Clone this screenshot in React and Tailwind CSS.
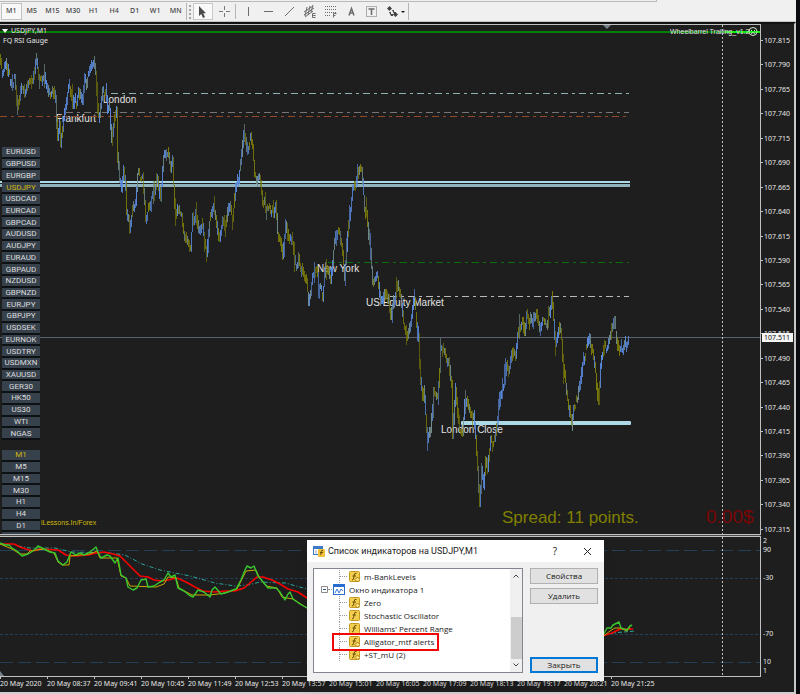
import { useMemo } from 'react';

const TIMEFRAMES = ['M1', 'M5', 'M15', 'M30', 'H1', 'H4', 'D1', 'W1', 'MN'];

const SYMBOLS = [
  'EURUSD', 'GBPUSD', 'EURGBP', 'USDJPY', 'USDCAD', 'EURCAD', 'GBPCAD', 'AUDUSD', 'AUDJPY',
  'EURAUD', 'GBPAUD', 'NZDUSD', 'GBPNZD', 'EURJPY', 'GBPJPY', 'USDSEK', 'EURNOK', 'USDTRY',
  'USDMXN', 'XAUUSD', 'GER30', 'HK50', 'US30', 'WTI', 'NGAS',
];

const SIDE_FRAMES = ['M1', 'M5', 'M15', 'M30', 'H1', 'H4', 'D1', 'W1'];

const PRICES = Array.from({ length: 21 }, (_, i) => (107.815 - i * 0.025).toFixed(3));

const TIMES = [
  '2020', '08:37', '09:41', '10:45', '11:49', '12:53', '13:57',
  '15:01', '16:05', '17:09', '18:13', '19:17', '20:21', '21:25',
];

const TREE = [
  { label: 'Zero', custom: true },
  { label: 'Stochastic Oscillator', custom: false },
  { label: "Williams' Percent Range", custom: false },
  { label: 'Alligator_mtf alerts', custom: true },
  { label: '+ST_mU (2)', custom: true },
];

// turning points of the price line: x y
const PRICE_POINTS = `0 60 2 71 4 70 6 62 9 75 12 80 15 78 18 105 20 98 22 88 25 93 28 82 30 77 33 80 36 60 40 79 42 79 45 72
49 93 51 90 53 88 56 104 58 138 60 122 61 142 65 108 70 84 72 92 74 108 77 98 79 90 82 104 85 85 88 77 92 66 94 62 96 76
98 105 100 118 103 95 106 90 108 115 110 108 112 138 115 118 117 108 118 160 120 180 122 190 124 168 126 185 127 213
130 227 133 210 136 200 138 173 143 175 145 200 146 217 150 205 153 195 156 185 158 176 161 198 164 158 168 155 171 170
173 162 174 185 176 220 178 210 182 215 184 230 188 240 191 247 193 220 196 212 199 235 202 225 205 242 207 250 210 220
214 207 216 220 219 238 223 220 226 228 229 207 233 218 236 190 239 175 241 160 244 130 247 148 251 138 253 150 255 170
258 178 261 182 263 200 266 210 270 207 274 215 276 204 278 232 281 240 283 255 286 222 290 240 293 245 295 265 299 262
303 275 307 283 309 300 313 277 317 272 320 290 323 294 326 265 331 280 334 250 337 232 340 238 343 255 345 275 348 235
350 215 353 188 356 185 359 168 362 172 365 205 367 215 369 240 371 255 373 283 378 275 381 300 385 288 388 300 391 320
394 300 398 285 401 300 404 325 408 335 411 322 414 296 416 310 419 345 421 380 423 398 424 390 428 440 431 425 434 390
438 395 441 352 445 350 450 368 452 385 453 438 456 385 458 410 460 430 463 432 465 405 467 396 470 410 474 417 476 440
478 470 480 505 482 475 484 488 486 460 488 468 491 440 495 440 498 420 501 390 504 386 507 362 510 370 513 350 516 360
518 340 520 325 523 318 525 332 528 312 531 325 534 318 537 314 540 333 543 320 547 322 550 312 552 295 554 320 556 346
560 328 562 340 564 370 567 390 570 408 572 422 574 402 578 402 581 380 583 360 587 350 590 336 592 350 596 370 599 405
601 365 604 350 608 348 611 335 615 322 618 345 620 355 624 350 627 340 629 338`.trim().split(/\s+/).map(Number);

const SESSIONS = [
  { name: 'London', x: 103, y: 103, x1: 111, lineY: 94, color: '#8fb0b2' },
  { name: 'Frankfurt', x: 56, y: 122, x1: 0, lineY: 117, color: '#95482a' },
  { name: '', x: 0, y: 0, x1: 66, lineY: 113, color: '#767676' },
  { name: 'New York', x: 317, y: 272, x1: 328, lineY: 263, color: '#0b700b' },
  { name: 'US Equity Market', x: 366, y: 306, x1: 390, lineY: 297, color: '#b8b8b8' },
  { name: 'London Close', x: 441, y: 433, x1: 0, lineY: 0, color: '' },
];

const RED = '0,544 14,544 20,547 26,549 33,551 40,549 58,550 66,555 75,556 88,555 96,553 104,552 113,554 120,556 128,564 140,576 148,577 154,580 162,581 168,580 177,578 186,582 195,587 203,591 214,592 226,591 235,591 244,588 250,583 257,577 263,577 272,580 280,584 288,589 298,592 307,598';
const GREEN = '0,543 5,545 9,545 12,548 17,551 22,556 28,554 33,551 38,546 44,549 50,552 55,553 58,561 63,565 67,562 71,552 76,555 80,553 84,555 90,552 96,547 98,552 101,558 107,555 110,556 115,563 118,558 121,575 126,578 128,587 133,590 137,588 141,580 146,579 148,587 154,586 160,582 164,580 168,573 171,577 175,575 178,588 184,591 189,595 193,597 198,590 204,592 210,597 212,590 215,587 221,594 228,592 233,590 236,589 241,580 245,570 247,566 251,568 254,566 258,576 264,583 268,588 276,588 280,592 285,600 288,594 290,592 293,599 300,604 307,608';
const YELLOW = '0,544 12,549 20,554 27,554 30,551 44,549 54,553 58,562 62,565 69,565 70,556 90,554 97,551 100,558 117,558 121,576 126,578 130,586 156,587 164,584 168,577 176,578 179,588 192,595 210,595 225,593 237,589 246,571 256,570 259,577 266,586 277,588 282,597 293,599 307,608';
const TEAL = '18,546 30,548 55,548 72,552 110,553 125,555 142,564 160,570 175,573 190,576 215,583 235,586 248,585 260,582 285,583 307,589';

function buildBars() {
  let seed = 11;
  const rnd = () => {
    seed = (seed * 16807) % 2147483647;
    return seed / 2147483647;
  };
  const bars = [];
  let offset = 0;
  for (let i = 0; i + 3 < PRICE_POINTS.length; i += 2) {
    const [x0, y0, x1, y1] = PRICE_POINTS.slice(i, i + 4);
    for (let x = x0; x < x1; x++) {
      const a = y0 + ((y1 - y0) * (x - x0)) / (x1 - x0);
      const b = y0 + ((y1 - y0) * (x + 1 - x0)) / (x1 - x0);
      if (x % 2 === 0) offset = (rnd() - 0.5) * 10;
      const wick = rnd() > 0.8 ? 10 : 3;
      const mixed = rnd();
      const up = mixed > 0.8 ? y1 > y0 : y1 < y0;
      bars.push({
        x,
        top: Math.round(Math.min(a, b) + offset - 1 - rnd() * wick),
        bottom: Math.round(Math.max(a, b) + offset + 2 + rnd() * wick),
        color: mixed > 0.5 && mixed < 0.68 ? '#728f8e' : up ? '#5a8ade' : '#7c7c08',
        opacity: wick > 3 ? 0.65 : 0.75 + rnd() * 0.25,
      });
    }
  }
  return bars;
}

function PriceChart() {
  const bars = useMemo(buildBars, []);
  return (
    <svg className="block h-[509px] w-full" role="img" aria-label="USDJPY M1">
      <g transform="translate(0 -25)">
        <rect x="0" y="31" width="100%" height="2" fill="#048004" />
        <rect x="725" y="31" width="36" height="2" fill="#08f008" />
        <path d="M603 25h8l-4 4z" fill="#77818c" />

        <g fontFamily="Liberation Sans, Arial, sans-serif" fontSize="10" fill="#e2e2e2">
          {SESSIONS.filter((s) => s.name).map((s) => (
            <text key={s.name} x={s.x} y={s.y}>{s.name}</text>
          ))}
        </g>
        {SESSIONS.filter((s) => s.color).map((s) => (
          <line key={s.lineY} x1={s.x1} x2="629" y1={s.lineY - 0.5} y2={s.lineY - 0.5} stroke={s.color} strokeDasharray="7 4 3 4" />
        ))}

        <rect x="0" y="181" width="630" height="2" fill="#add8e6" />
        <rect x="0" y="184" width="630" height="3" fill="#8fb4be" />
        <rect x="461" y="421" width="170" height="4" rx="1" fill="#add8e6" />
        <rect x="0" y="337" width="100%" height="1" fill="#59626c" />

        <g shapeRendering="crispEdges">
          {bars.map((b) => (
            <rect key={b.x} x={b.x} y={b.top} width="1" height={b.bottom - b.top} fill={b.color} opacity={b.opacity} />
          ))}
        </g>

        <g fontFamily="Noto Sans, Tahoma, sans-serif" fontSize="7" fill="#e4e4e4">
          <path d="M2 29h6l-3 4z" fill="#fff" />
          <text x="11" y="33">USDJPY,M1</text>
          <text x="3" y="43">FQ RSI Gauge</text>
          <text x="670" y="34" fontFamily="Liberation Sans, Arial, sans-serif">Wheelbarrel Trailing_v1.2</text>
        </g>
        <g fill="none" stroke="#cfe8cf">
          <circle cx="753" cy="31.5" r="4" />
          <path d="M751 33.500q2 -2 4 0M751.500 30v1M754.500 30v1" />
        </g>

        <g fontFamily="Liberation Sans, Arial, sans-serif">
          <text x="41" y="525" fontSize="7" fill="#cdb80c">iLessons.In/Forex</text>
          <text x="502" y="523" fontSize="17" fill="#808000">Spread: 11 points.</text>
          <text x="706" y="523" fontSize="19" fill="#7d0505">0.00$</text>
        </g>
        <line x1="722.5" x2="722.5" y1="25" y2="534" stroke="#c4c4c4" strokeDasharray="2 2" />
      </g>
    </svg>
  );
}

function IndicatorChart() {
  return (
    <svg className="block h-[139px] w-full" role="img" aria-label="Williams' Percent Range">
      <g transform="translate(0 -537)" fill="none">
        <g stroke="#23405a">
          <line x1="0" x2="100%" y1="550.5" y2="550.5" strokeDasharray="13 5" />
          <line x1="0" x2="100%" y1="578.5" y2="578.5" strokeDasharray="3 2" />
          <line x1="0" x2="100%" y1="634.5" y2="634.5" strokeDasharray="3 2" />
          <line x1="0" x2="100%" y1="662.5" y2="662.5" strokeDasharray="13 5" />
        </g>
        <polyline points={TEAL} stroke="#2aa598" strokeDasharray="4 2 1 2" />
        <polyline points="612,633 635,631" stroke="#2aa598" strokeDasharray="4 2" />
        <g strokeLinejoin="round">
          <polyline points={RED} stroke="#f80000" strokeWidth="1.6" />
          <polyline points="602,636 612,633 620,629 633,629" stroke="#f80000" strokeWidth="1.6" />
          <polyline points={YELLOW} stroke="#c8a800" strokeWidth="1" />
          <polyline points={GREEN} stroke="#38c82e" strokeWidth="1.4" />
          <polyline points="602,637 610,631 615,628 620,628 627,631 630,627" stroke="#c8a800" />
          <polyline points="602,637 607,628 611,628 613,625 619,622 621,628 627,630 630,626 632,625" stroke="#38c82e" strokeWidth="1.4" />
        </g>
        <path d="M0 671l4 5h-4z" fill="#77818c" />
        <line x1="722.5" x2="722.5" y1="537" y2="676" stroke="#c4c4c4" strokeDasharray="2 2" />
      </g>
    </svg>
  );
}

const TOOLS = [
  { name: 'Vertical line', art: <path d="M7.500 3v9" /> },
  { name: 'Horizontal line', art: <path d="M3 7.500h9" /> },
  { name: 'Trendline', art: <path d="M3 12l9-9" /> },
  {
    name: 'Equidistant channel',
    art: (
      <>
        <path d="M2 8l9-6M2 11l10-7M3 13l8-6M5 3l-2 9M8 2l-2 9M11 1l-2 7" />
        <path d="M13.500 9.500h-3v4h3M10.500 11.500h3" />
      </>
    ),
  },
  {
    name: 'Fibonacci retracement',
    art: (
      <>
        <path d="M2 2.500h11M2 5.500h11M2 8.500h11M2 11.500h6" strokeDasharray="1 1" />
        <path d="M13.500 9.500h-3v4M10.500 11.500h2" />
      </>
    ),
  },
  { name: 'Text', art: <path d="M5 11.500l2.500-7 2.500 7M6 9h3" strokeWidth="1.5" /> },
  {
    name: 'Text label',
    art: (
      <>
        <rect x="2.5" y="2.500" width="10" height="10" strokeDasharray="1 1" />
        <path d="M4.500 5h6M7.500 5v6" strokeWidth="1.5" />
      </>
    ),
  },
];

function Toolbar() {
  return (
    <div className="bg-[#f0f0f0]">
      <div className="h-[2px] w-[657px] max-w-full border-b border-r border-[#b9b9b9]" />
      <div className="flex h-[20px] items-center border-b border-[#c4c4c4] pl-[1px]">
        <div className="grid h-[17px] w-[185px] grid-cols-9 font-['Noto_Sans',Tahoma,sans-serif] text-[7px] font-medium text-[#444]">
          {TIMEFRAMES.map((t) => (
            <button key={t} className={t === 'M1' ? 'border border-[#c2c2c2] bg-[#f8f8f8]' : ''}>{t}</button>
          ))}
        </div>
        <div className="h-[17px] w-px bg-[#b5b5b5]" />
        <div className="mx-[2px] h-[14px] border-l-2 border-dotted border-[#a5a5a5]" />
        <button aria-label="Cursor" className="flex h-[17px] w-[20px] items-center justify-center border border-[#c8c8c8] bg-[#f9f9f9]">
          <svg width="10" height="12" viewBox="0 0 10 12"><path d="M1 0v10l2.300-2 1.700 4 2-1-1.800-3.700H8z" fill="#4a4a4a" /></svg>
        </button>
        <button aria-label="Crosshair" className="flex h-[17px] w-[22px] items-center justify-center">
          <svg width="11" height="11" viewBox="0 0 11 11"><path d="M5.500 0v4M5.500 7v4M0 5.500h4M7 5.500h4" stroke="#777" /></svg>
        </button>
        <div className="h-[15px] w-px bg-[#b5b5b5]" />
        <div className="ml-[2px] grid h-[17px] w-[144px] grid-cols-7">
          {TOOLS.map((t) => (
            <button key={t.name} aria-label={t.name} className="flex items-center justify-center">
              <svg width="15" height="15" viewBox="0 0 15 15" fill="none" stroke="#6c6c6c">{t.art}</svg>
            </button>
          ))}
        </div>
        <button aria-label="Arrows" className="flex h-[17px] w-[24px] items-center justify-end">
          <svg width="20" height="13" viewBox="0 0 20 13">
            <path d="M1 3.500l2.500-2.500 2.500 2.500-2.500 2.500zM6 5h2v2h2v2H8zM7 9.500l2.500-2.500 2.500 2.500-2.500 2.500zM3 7h2v2h2v2H5z" fill="#444" />
            <path d="M15 6h4l-2 2z" fill="#111" />
          </svg>
        </button>
        <div className="ml-[2px] h-[17px] w-px bg-[#b5b5b5]" />
      </div>
    </div>
  );
}

function SideButton({ label, active }) {
  return (
    <button className={`min-h-0 overflow-hidden border-b-2 border-[#0e1114] bg-[#37414b] text-[8px] leading-[9px] ${active ? 'text-[#d2b60a]' : 'text-[#dcdcdc]'}`}>
      {label}
    </button>
  );
}

function SidePanel() {
  return (
    <div className="absolute inset-y-0 left-[2px] w-[38px] overflow-hidden pt-[122px] font-['Roboto',Arial,sans-serif]">
      <div className="grid h-[293px] auto-rows-fr">
        {SYMBOLS.map((s) => <SideButton key={s} label={s} active={s === 'USDJPY'} />)}
      </div>
      <div className="mt-[10px] grid h-[94px] auto-rows-fr">
        {SIDE_FRAMES.map((s) => <SideButton key={s} label={s} active={s === 'M1'} />)}
      </div>
    </div>
  );
}

function FunctionIcon({ custom }) {
  return (
    <svg className="h-[11px] w-[11px] shrink-0" viewBox="0 0 11 11">
      <rect x=".5" y=".5" width="10" height="10" rx="1" fill="#f2cf4e" stroke="#c79a1b" />
      <path d="M7.500 2.500q-2-1-2.300 1.500L4.500 8q-.3 1-1.500.8M3.500 5h3.500" fill="none" stroke="#6b4c05" />
      {custom && <path d="M8.500 6l2.500 2.500L8.500 11 6 8.500z" fill="#ffe27a" stroke="#8f6a0c" strokeWidth=".8" />}
    </svg>
  );
}

function TreeItem({ label, custom }) {
  return (
    <li className="flex h-[13px] items-center whitespace-nowrap">
      <span className="ml-[25px] h-full w-px shrink-0 border-l border-dotted border-[#999]" />
      <span className="mr-[2px] w-[7px] shrink-0 border-t border-dotted border-[#999]" />
      <FunctionIcon custom={custom} />
      <span className="ml-[4px]">{label}</span>
    </li>
  );
}

function DialogButton({ children, primary }) {
  return (
    <button className={`h-[16px] w-full bg-[#e1e1e1] text-[8px] leading-[12px] ${primary ? 'border-2 border-[#0078d7]' : 'border border-[#b0b0b0]'}`}>
      {children}
    </button>
  );
}

function IndicatorDialog() {
  return (
    <div role="dialog" aria-label="Список индикаторов на USDJPY,M1" className="absolute left-[307px] top-[516px] w-[297px] bg-[#f0f0f0] font-['Open_Sans','Noto_Sans',sans-serif] text-[8px] text-[#1a1a1a] shadow-lg">
      <div className="flex h-[22px] items-center bg-white pl-[6px] pr-[12px]">
        <svg width="12" height="12" viewBox="0 0 12 12" className="shrink-0">
          <rect x=".5" y="1.500" width="9" height="8" fill="#fff" stroke="#3c78c8" />
          <path d="M1 3h8" stroke="#3c78c8" strokeWidth="2" />
          <path d="M2 6h2M2 8h2" stroke="#9ab" />
          <rect x="5" y="4" width="7" height="8" rx="1" fill="#eec23c" />
          <path d="M10 5.500q-1.500-.5-1.700 1L7.700 10M7 7.500h3" fill="none" stroke="#6b4c05" />
        </svg>
        <h2 className="ml-[3px] font-['Roboto',sans-serif] text-[9px] leading-[12px]">Список индикаторов на USDJPY,M1</h2>
        <button aria-label="Справка" className="ml-auto w-[10px] text-[10px] leading-[12px]">?</button>
        <button aria-label="Закрыть окно" className="ml-[23px] w-[9px]">
          <svg className="h-[9px] w-[9px]" viewBox="0 0 9 9"><path d="M1 1l7 7M8 1l-7 7" stroke="#222" /></svg>
        </button>
      </div>
      <div className="flex gap-[7px] px-[6px] pb-[8px] pt-[6px]">
        <div className="relative flex h-[105px] flex-1 border border-[#82878f] bg-white">
          <ul className="flex-1 pt-[1px] leading-[13px]">
            <TreeItem label="m-BankLevels" custom />
            <li className="flex h-[13px] items-center whitespace-nowrap">
              <svg className="ml-[7px] h-[7px] w-[7px]" viewBox="0 0 7 7"><path d="M.5.500h6v6h-6z" fill="#fff" stroke="#8a8a8a" /><path d="M2 3.500h3" stroke="#35569c" /></svg>
              <span className="mr-[1px] w-[4px] border-t border-dotted border-[#999]" />
              <svg className="h-[11px] w-[12px]" viewBox="0 0 12 11">
                <rect x=".5" y=".5" width="11" height="10" fill="#fff" stroke="#2a6dd0" />
                <path d="M0 1.500h12" stroke="#2a6dd0" strokeWidth="3" />
                <path d="M2 9l2-4 2 4 2-4 2 2" fill="none" stroke="#3c7be0" />
              </svg>
              <span className="ml-[4px]">Окно индикатора 1</span>
            </li>
            {TREE.map((t) => <TreeItem key={t.label} {...t} />)}
          </ul>
          <div className="flex w-[12px] flex-col items-center bg-[#f0f0f0] py-[5px]">
            <svg className="h-[4px] w-[6px]" viewBox="0 0 6 4"><path d="M.5 3.500L3 1l2.500 2.500" fill="none" stroke="#444" /></svg>
            <div className="mb-[4px] mt-auto h-[42px] w-[11px] bg-[#cdcdcd]" />
            <svg className="h-[4px] w-[6px]" viewBox="0 0 6 4"><path d="M.5.500L3 3l2.500-2.500" fill="none" stroke="#444" /></svg>
          </div>
          <div className="pointer-events-none absolute left-[18px] top-[64px] h-[18px] w-[107px] border-2 border-[#f00808]" />
        </div>
        <div className="flex w-[68px] flex-col gap-[4px]">
          <DialogButton>Свойства</DialogButton>
          <DialogButton>Удалить</DialogButton>
          <div className="flex-1" />
          <DialogButton primary>Закрыть</DialogButton>
        </div>
      </div>
    </div>
  );
}

export default function App() {
  return (
    <div className="min-h-screen overflow-hidden bg-[#0a0c10]">
      <div className="mr-[4px]">
        <Toolbar />
        <div className="border-b-2 border-r-2 border-t-2 border-b-[#d0d0d0] border-r-[#c8c8c8] border-t-[#111] bg-[#1e1e1e]">
          <div className="relative font-['Noto_Sans',Tahoma,sans-serif] text-[7px] leading-[9px] text-[#e6e6e6]">
            <div className="flex">
              <div className="relative min-w-0 flex-1 border-b border-r border-t border-[#c0c0c0]">
                <PriceChart />
                <SidePanel />
              </div>
              <div className="relative flex w-[33px] flex-col justify-between pb-[1px] pt-[12px]">
                {PRICES.map((p) => (
                  <span key={p} className="flex items-center gap-[1px]">
                    <i className="h-px w-[2px] bg-[#c0c0c0]" />
                    {p}
                  </span>
                ))}
                <span className="absolute left-[1px] top-[309px] w-[31px] bg-[#f4f4f4] pl-[2px] text-[#111]">107.511</span>
              </div>
            </div>
            <div className="mr-[33px] h-px bg-[#4a4a4a]" />
            <div className="flex">
              <div className="min-w-0 flex-1 border-b border-r border-t border-[#c0c0c0]">
                <IndicatorChart />
              </div>
              <div className="flex w-[33px] flex-col pl-[2px]">
                <span>2</span>
                <span>90</span>
                <span className="mt-[19px]">-30</span>
                <span className="mt-[47px]">-70</span>
                <span className="mt-[19px]">10</span>
                <span>1</span>
              </div>
            </div>
            <div className="flex h-[15px] overflow-hidden whitespace-nowrap">
              {TIMES.map((t) => (
                <span key={t} className="w-[47px] shrink-0">
                  <i className="block h-[2px] w-px bg-[#c0c0c0]" />
                  20 May {t}
                </span>
              ))}
            </div>
            <IndicatorDialog />
          </div>
        </div>
      </div>
    </div>
  );
}
